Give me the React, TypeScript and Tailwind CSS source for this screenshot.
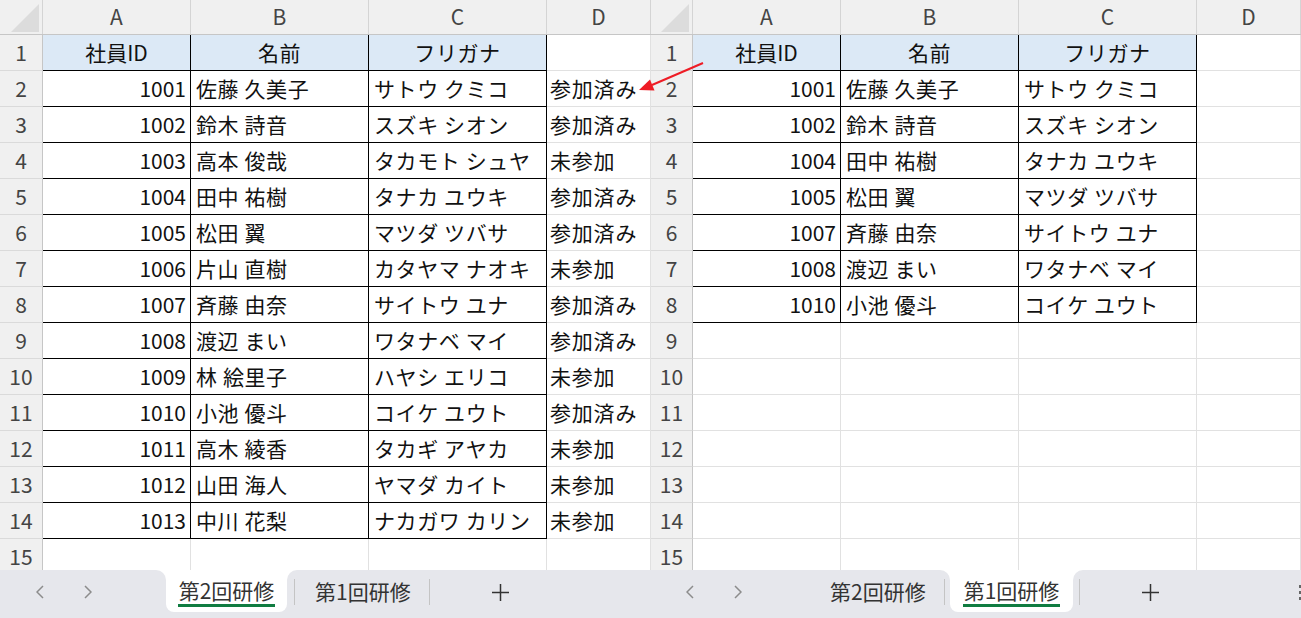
import React from "react";

type Row = string[];

const secondTraining: Row[] = [
  ["社員ID", "名前", "フリガナ", ""],
  ["1001", "佐藤 久美子", "サトウ クミコ", "参加済み"],
  ["1002", "鈴木 詩音", "スズキ シオン", "参加済み"],
  ["1003", "高本 俊哉", "タカモト シュヤ", "未参加"],
  ["1004", "田中 祐樹", "タナカ ユウキ", "参加済み"],
  ["1005", "松田 翼", "マツダ ツバサ", "参加済み"],
  ["1006", "片山 直樹", "カタヤマ ナオキ", "未参加"],
  ["1007", "斉藤 由奈", "サイトウ ユナ", "参加済み"],
  ["1008", "渡辺 まい", "ワタナベ マイ", "参加済み"],
  ["1009", "林 絵里子", "ハヤシ エリコ", "未参加"],
  ["1010", "小池 優斗", "コイケ ユウト", "参加済み"],
  ["1011", "高木 綾香", "タカギ アヤカ", "未参加"],
  ["1012", "山田 海人", "ヤマダ カイト", "未参加"],
  ["1013", "中川 花梨", "ナカガワ カリン", "未参加"],
];

const firstTraining: Row[] = [
  ["社員ID", "名前", "フリガナ", ""],
  ["1001", "佐藤 久美子", "サトウ クミコ", ""],
  ["1002", "鈴木 詩音", "スズキ シオン", ""],
  ["1004", "田中 祐樹", "タナカ ユウキ", ""],
  ["1005", "松田 翼", "マツダ ツバサ", ""],
  ["1007", "斉藤 由奈", "サイトウ ユナ", ""],
  ["1008", "渡辺 まい", "ワタナベ マイ", ""],
  ["1010", "小池 優斗", "コイケ ユウト", ""],
];

const ChevronLeft = () => (
  <svg width="8" height="14" viewBox="0 0 8 14">
    <polyline points="7,1 1,7 7,13" fill="none" stroke="#8c8c8c" strokeWidth="1.5" />
  </svg>
);

const ChevronRight = () => (
  <svg width="8" height="14" viewBox="0 0 8 14">
    <polyline points="1,1 7,7 1,13" fill="none" stroke="#8c8c8c" strokeWidth="1.5" />
  </svg>
);

const Plus = ({ className }: { className: string }) => (
  <svg className={className} width="17" height="17" viewBox="0 0 17 17">
    <line x1="8.5" y1="0" x2="8.5" y2="17" stroke="#333" strokeWidth="1.5" />
    <line x1="0" y1="8.5" x2="17" y2="8.5" stroke="#333" strokeWidth="1.5" />
  </svg>
);

const Divider = ({ className }: { className: string }) => (
  <div className={`${className} w-px h-[26px] bg-[#c4c4c4]`} />
);

const ActiveTab = ({ label, width }: { label: string; width: string }) => (
  <div className={`${width} flex-none bg-[#e6e7ec]`}>
    <div className="h-[42px] bg-white rounded-b-[8px] flex justify-center pt-[8px]">
      <div className="inline-flex flex-col items-stretch">
        <span className="text-[21px] leading-[24px] text-[#333] px-[1px]">{label}</span>
        <div className="mt-[2px] h-[3px] bg-[#107c41]" />
      </div>
    </div>
  </div>
);

const Sheet = ({ rows, rh, showD }: { rows: Row[]; rh: string; showD: boolean }) => {
  const lines = Array.from({ length: 15 }, (_, i) => i);
  return (
    <div className="h-[570px] overflow-hidden bg-white text-[21px]">
      {/* column header */}
      <div className="flex h-[35px] bg-[#f0f0f0] border-b border-[#c6c6c6] text-[#444]">
        <div className={`${rh} flex-none border-r border-[#d4d4d4] flex items-end justify-end pr-[3px] pb-[2px]`}>
          <svg width="28" height="28" viewBox="0 0 28 28">
            <polygon points="28,0 28,28 0,28" fill="#dcdcdc" />
          </svg>
        </div>
        <div className="w-[148px] flex-none border-r border-[#d4d4d4] flex items-center justify-center">A</div>
        <div className="w-[178px] flex-none border-r border-[#d4d4d4] flex items-center justify-center">B</div>
        <div className="w-[178px] flex-none border-r border-[#d4d4d4] flex items-center justify-center">C</div>
        <div className="flex-1 border-r border-[#d4d4d4] flex items-center justify-center">D</div>
      </div>

      {lines.map((i) => {
        const row = rows[i];
        const inTable = !!row;
        const head = i === 0;
        const edge = inTable ? "border-black" : "border-[#e1e1e1]";
        const fill = head ? "bg-[#dce9f6]" : "bg-white";
        return (
          <div key={i} className="flex h-[36px] text-[#111] whitespace-nowrap">
            <div className={`${rh} flex-none bg-[#f0f0f0] border-r border-b border-r-[#c6c6c6] border-b-[#dadada] flex items-center justify-center text-[#444]`}>
              {i + 1}
            </div>
            <div className={`w-[148px] flex-none border-r border-b ${edge} ${fill} flex items-center ${head ? "justify-center" : "justify-end pr-[4px]"}`}>
              {row ? row[0] : ""}
            </div>
            <div className={`w-[178px] flex-none border-r border-b ${edge} ${fill} flex items-center tracking-[0.6px] ${head ? "justify-center" : "pl-[5px]"}`}>
              {row ? row[1] : ""}
            </div>
            <div className={`w-[178px] flex-none border-r border-b ${edge} ${fill} flex items-center tracking-[0.6px] ${head ? "justify-center" : "pl-[5px]"}`}>
              {row ? row[2] : ""}
            </div>
            <div className="flex-1 border-r border-b border-[#e1e1e1] flex items-center pl-[3px] tracking-[0.8px] overflow-hidden">
              {showD && row ? row[3] : ""}
            </div>
          </div>
        );
      })}
    </div>
  );
};

export default function App() {
  return (
    <div className="relative w-[1301px] h-[618px] overflow-hidden flex bg-white font-['Noto_Sans_CJK_JP','Noto_Sans',sans-serif]">
      {/* 第2回研修 sheet */}
      <div className="w-[651px] flex-none flex flex-col">
        <Sheet rows={secondTraining} rh="w-[43px]" showD={true} />
        <div className="flex h-[48px] bg-white">
          <div className="w-[166px] flex-none bg-[#e6e7ec] rounded-tr-[10px]">
            <div className="h-[44px] flex items-center pl-[36px] gap-[40px]">
              <ChevronLeft />
              <ChevronRight />
            </div>
          </div>
          <ActiveTab label="第2回研修" width="w-[121px]" />
          <div className="flex-1 bg-[#e6e7ec] rounded-tl-[10px]">
            <div className="h-[44px] flex items-center">
              <Divider className="ml-[7px]" />
              <span className="ml-[20px] text-[21px] text-[#333]">第1回研修</span>
              <Divider className="ml-[18px]" />
              <Plus className="ml-[62px]" />
            </div>
          </div>
        </div>
      </div>

      {/* 第1回研修 sheet */}
      <div className="flex-1 flex flex-col">
        <Sheet rows={firstTraining} rh="w-[42px]" showD={false} />
        <div className="flex h-[48px] bg-white">
          <div className="w-[299px] flex-none bg-[#e6e7ec] rounded-tr-[10px]">
            <div className="h-[44px] flex items-center pl-[35px]">
              <ChevronLeft />
              <div className="ml-[40px]">
                <ChevronRight />
              </div>
              <span className="ml-[88px] text-[21px] text-[#333]">第2回研修</span>
              <Divider className="ml-[18px]" />
            </div>
          </div>
          <ActiveTab label="第1回研修" width="w-[123px]" />
          <div className="flex-1 bg-[#e6e7ec] rounded-tl-[10px]">
            <div className="h-[44px] flex items-center">
              <Divider className="ml-[6px]" />
              <Plus className="ml-[62px]" />
              <div className="ml-auto mr-0 flex flex-col gap-[3px]">
                <div className="w-[2px] h-[3px] bg-[#666]" />
                <div className="w-[2px] h-[3px] bg-[#666]" />
                <div className="w-[2px] h-[3px] bg-[#666]" />
              </div>
            </div>
          </div>
        </div>
      </div>

      {/* red arrow pointing at the 参加済み column */}
      <svg className="absolute left-0 top-0 pointer-events-none" width="1301" height="618">
        <line x1="703" y1="63" x2="652" y2="85" stroke="#ee1c25" strokeWidth="2" />
        <polygon points="639,90 654.5,90.5 650,79.5" fill="#ee1c25" />
      </svg>
    </div>
  );
}
